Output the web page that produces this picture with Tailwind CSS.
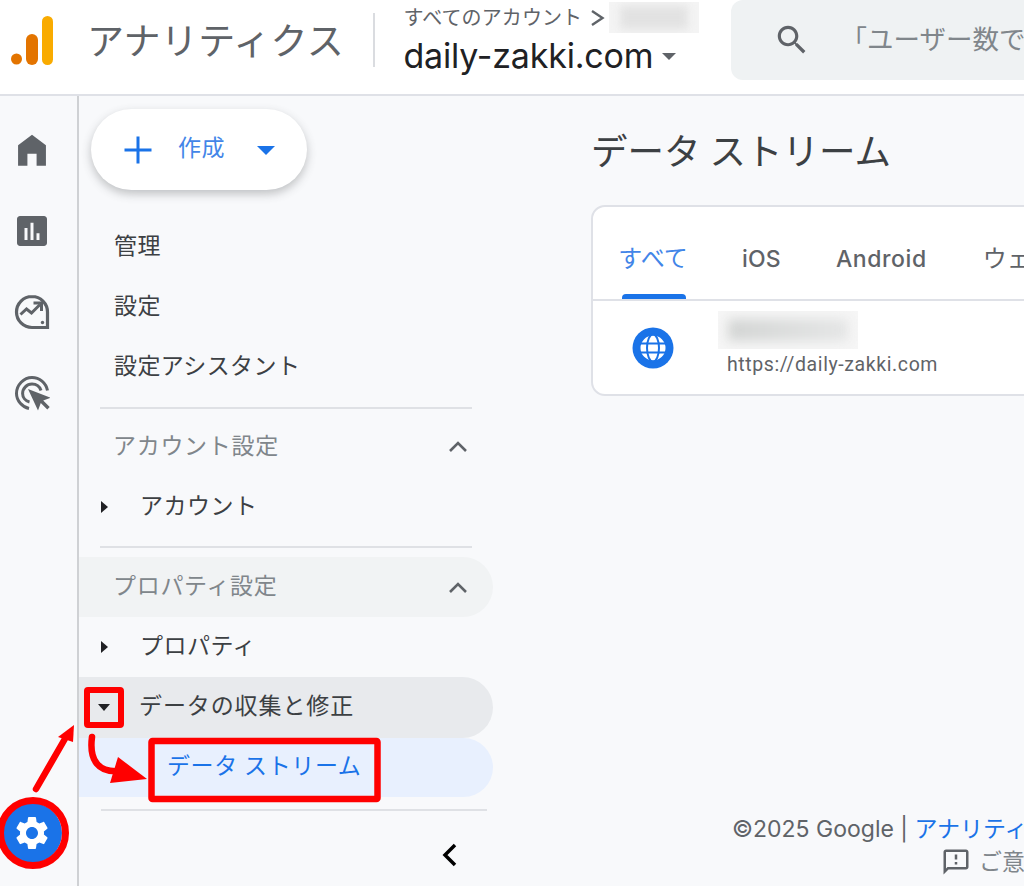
<!DOCTYPE html>
<html lang="ja">
  <head>
    <meta charset="UTF-8" />
    <title>アナリティクス</title>
    <script src="https://cdn.jsdelivr.net/npm/@tailwindcss/browser@4"></script>
  </head>
  <body class="relative w-[1024px] h-[886px] overflow-hidden bg-[#f8f9fb] text-[#3c4043] font-['Roboto','Noto_Sans_CJK_JP',sans-serif]">
    <!-- top bar -->
    <header class="flex items-center h-[96px] bg-white border-b-2 border-[#dfe1e7] overflow-hidden">
      <svg class="ml-[11px] w-[42px] h-[49px] mt-[-14px] shrink-0" viewBox="0 0 42 49">
        <rect x="31" y="0" width="11" height="49" rx="5.5" fill="#f9ab00" />
        <rect x="15" y="18" width="12" height="31" rx="6" fill="#e37400" />
        <circle cx="5.5" cy="43" r="5.5" fill="#e37400" />
      </svg>
      <div class="ml-[34px] w-[286px] mt-[-9px] text-[37px] tracking-[0.3px] leading-none text-[#5f6368] shrink-0 whitespace-nowrap">アナリティクス</div>
      <div class="w-[1.5px] h-[54px] bg-[#dadce0] mt-[-14px] shrink-0"></div>
      <div class="ml-[29px] w-[327px] shrink-0 mt-[-12px]">
        <div class="flex items-center h-[32px] mt-[-3px]">
          <span class="text-[20px] tracking-[0.1px] text-[#5f6368] whitespace-nowrap">すべてのアカウント</span>
          <svg class="ml-[8px] w-[16px] h-[20px]" viewBox="0 0 16 20" fill="none" stroke="#5f6368" stroke-width="2.4"><path d="M2 3l10.5 7L2 17" /></svg>
          <div class="ml-[3px] w-[90px] h-[31px] bg-[#f4f4f4] overflow-hidden">
            <div class="w-[90px] h-[31px] bg-[#e2e2e2] blur-[6px] scale-75"></div>
          </div>
        </div>
        <div class="flex items-center h-[44px]">
          <span class="text-[34px] leading-none tracking-[-0.2px] text-[#202124] whitespace-nowrap font-['Inter',sans-serif]">daily-zakki.com</span>
          <span class="ml-[9px] mt-[2px] w-0 h-0 border-x-[7.5px] border-x-transparent border-t-[7.5px] border-t-[#5f6368]"></span>
        </div>
      </div>
      <div class="flex items-center w-[400px] h-[80px] mt-[-14px] shrink-0 bg-[#eff2f3] rounded-[12px]">
        <svg class="ml-[42px] w-[38px] h-[38px] shrink-0" viewBox="0 0 24 24" fill="#5f6368"><path d="M15.5 14h-.79l-.28-.27C15.41 12.59 16 11.11 16 9.5 16 5.91 13.09 3 9.5 3S3 5.91 3 9.5 5.91 16 9.5 16c1.61 0 3.09-.59 4.23-1.57l.27.28v.79l5 4.99L20.49 19l-4.99-5zm-6 0C7.01 14 5 11.99 5 9.5S7.01 5 9.5 5 14 7.01 14 9.5 11.99 14 9.5 14z" /></svg>
        <span class="ml-[30px] text-[26.5px] text-[#80868b] whitespace-nowrap">「ユーザー数で</span>
      </div>
    </header>

    <div class="flex h-[790px]">
      <!-- icon rail -->
      <nav class="flex flex-col items-center w-[79px] shrink-0 border-r-2 border-[#cfd1d4] pt-[13px] pb-[23px] pr-[14px] pl-0">
        <div class="flex items-center justify-center h-[81px]">
          <svg class="w-[38px] h-[38px]" viewBox="0 0 24 24" fill="#5f6368"><path d="M12 2.3L3.2 9v13h5.9v-7.6h5.8V22h5.9V9z" /></svg>
        </div>
        <div class="flex items-center justify-center h-[81px]">
          <svg class="w-[36px] h-[36px]" viewBox="0 0 24 24" fill="#5f6368"><path d="M20 2H4C2.9 2 2 2.9 2 4v16c0 1.1.9 2 2 2h16c1.1 0 2-.9 2-2V4c0-1.1-.9-2-2-2zM9 18H7v-8h2v8zm4 0h-2V6.5h2V18zm4 0h-2v-4.5h2V18z" /></svg>
        </div>
        <div class="flex items-center justify-center h-[81px]">
          <svg class="w-[36px] h-[36px]" viewBox="0 0 36 36" fill="none" stroke="#5f6368" stroke-width="3.2">
            <path d="M18 2.5C9.4 2.5 2.5 9.4 2.5 18S9.4 33.5 18 33.5h15.5V18C33.5 9.4 26.6 2.5 18 2.5z" />
            <path d="M6.5 20.5l6-5.5 5 4 8.5-8.500" stroke-width="3" />
            <path d="M19.5 9h8V17" stroke-width="3" />
            <circle cx="28.5" cy="28.5" r="1.7" fill="#5f6368" stroke="none" />
          </svg>
        </div>
        <div class="flex items-center justify-center h-[81px]">
          <svg class="w-[36px] h-[36px]" viewBox="0 0 36 36" fill="none" stroke="#5f6368" stroke-width="3">
            <path d="M15 33.5C8.5 32 2.5 26 2.5 18.5 2.5 10 9.8 2.5 18 2.5c7.5 0 14 5.5 15.5 13" />
            <path d="M15.5 27C11.5 26 8.6 22.5 8.6 18.5c0-5.2 4.2-9.4 9.4-9.4 4.2 0 7.7 2.700 9 6.5" />
            <path d="M14 14l10 21.5 2.8-7.5 6.5 6.5 2.4-2.4-6.5-6.5 7.3-2.8z" fill="#5f6368" stroke="none" />
          </svg>
        </div>
        <button class="mt-auto flex items-center justify-center w-[60px] h-[60px] rounded-full bg-[#1a73e8] shrink-0">
          <svg class="w-[40px] h-[40px]" viewBox="0 0 24 24" fill="#fff"><path d="M19.14 12.94c.04-.3.06-.61.06-.94 0-.32-.02-.64-.07-.94l2.03-1.58c.18-.14.23-.41.12-.61l-1.92-3.32c-.12-.22-.37-.29-.59-.22l-2.39.96c-.5-.38-1.03-.7-1.62-.94l-.36-2.54c-.04-.24-.24-.41-.48-.41h-3.84c-.24 0-.43.17-.47.41l-.36 2.54c-.59.24-1.13.57-1.62.94l-2.39-.96c-.22-.08-.47 0-.59.22L2.74 8.87c-.12.21-.08.47.12.61l2.03 1.58c-.05.3-.09.63-.09.94s.02.64.07.94l-2.03 1.58c-.18.14-.23.41-.12.61l1.92 3.32c.12.22.37.29.59.22l2.39-.96c.5.38 1.03.7 1.62.94l.36 2.54c.05.24.24.41.48.41h3.84c.24 0 .44-.17.47-.41l.36-2.54c.59-.24 1.13-.56 1.62-.94l2.39.96c.22.08.47 0 .59-.22l1.92-3.32c.12-.22.07-.47-.12-.61l-2.01-1.58zM12 15.6c-1.98 0-3.6-1.62-3.6-3.6s1.62-3.6 3.6-3.6 3.6 1.62 3.6 3.6-1.62 3.6-3.6 3.6z" /></svg>
        </button>
      </nav>

      <!-- side menu -->
      <aside class="flex flex-col w-[414px] shrink-0 text-[23px]">
        <button class="flex items-center mt-[13px] ml-[12px] w-[216px] h-[81px] shrink-0 bg-white rounded-full shadow-[0_4px_10px_rgba(60,64,67,0.3)] text-[#1a73e8]">
          <svg class="ml-[32px] w-[30px] h-[30px]" viewBox="0 0 30 30" fill="#1a73e8"><path d="M13.5 1.5h3v12h12v3h-12v12h-3v-12h-12v-3h12z" /></svg>
          <span class="ml-[25px] tracking-[0.5px] text-[#4285e8]">作成</span>
          <span class="ml-[32px] mt-[2px] w-0 h-0 border-x-[9px] border-x-transparent border-t-[9px] border-t-[#1a73e8]"></span>
        </button>
        <div class="flex items-center h-[60px] mt-[26px] pt-[2px] pl-[35px] tracking-[0.4px]">管理</div>
        <div class="flex items-center h-[60px] pt-[2px] pl-[35px] tracking-[0.4px]">設定</div>
        <div class="flex items-center h-[60px] pt-[2px] pl-[35px] tracking-[0.4px]">設定アシスタント</div>
        <div class="h-[2px] mt-[11px] ml-[21px] w-[372px] bg-[#dfe1e5] shrink-0"></div>
        <div class="flex items-center justify-between h-[60px] mt-[7px] pt-[2px] pl-[34px] pr-[24px] text-[#80868b] tracking-[0.7px]">
          アカウント設定
          <svg class="w-[22px] h-[14px] mb-[2px]" viewBox="0 0 22 14" fill="none" stroke="#5f6368" stroke-width="2.6"><path d="M3 12l8-8 8 8" /></svg>
        </div>
        <div class="flex items-center h-[60px] pt-[2px]">
          <span class="ml-[22px] w-0 h-0 border-y-[6.5px] border-y-transparent border-l-[7px] border-l-[#202124]"></span>
          <span class="ml-[32px] tracking-[0.5px]">アカウント</span>
        </div>
        <div class="h-[2px] mt-[10px] ml-[21px] w-[372px] bg-[#dfe1e5] shrink-0"></div>
        <div class="flex items-center justify-between h-[60px] mt-[9px] pl-[34px] pr-[24px] pt-[1px] text-[#80868b] tracking-[0.7px] bg-[#f1f3f4] rounded-r-full">
          プロパティ設定
          <svg class="w-[22px] h-[14px] mb-[2px]" viewBox="0 0 22 14" fill="none" stroke="#5f6368" stroke-width="2.6"><path d="M3 12l8-8 8 8" /></svg>
        </div>
        <div class="flex items-center h-[60px]">
          <span class="ml-[22px] w-0 h-0 border-y-[6.5px] border-y-transparent border-l-[7px] border-l-[#202124]"></span>
          <span class="ml-[32px] tracking-[0.5px]">プロパティ</span>
        </div>
        <div class="flex items-center h-[61px] bg-[#e8eaed] rounded-r-full">
          <span class="ml-[19px] w-0 h-0 border-x-[6.5px] border-x-transparent border-t-[7px] border-t-[#202124]"></span>
          <span class="ml-[29px] tracking-[0.9px]">データの収集と修正</span>
        </div>
        <div class="flex items-center h-[59px] pl-[88px] bg-[#e8f0fe] rounded-r-full text-[#1a73e8] tracking-[0.6px]">データ ストリーム</div>
        <div class="h-[2px] mt-[12px] ml-[22px] w-[386px] bg-[#dfe1e5] shrink-0"></div>
        <div class="flex justify-end mt-[31px] pr-[34px]">
          <svg class="w-[20px] h-[26px]" viewBox="0 0 20 26" fill="none" stroke="#000" stroke-width="3.5"><path d="M16 3L6 13l10 10" /></svg>
        </div>
      </aside>

      <!-- main -->
      <main class="flex-1 min-w-0 pl-[98px] overflow-hidden">
        <h1 class="mt-[33px] text-[36.5px] leading-[48px] text-[#3c4043] whitespace-nowrap">データ ストリーム</h1>
        <section class="mt-[28px] w-[600px] h-[191px] bg-white border-2 border-[#dfe1e7] rounded-[14px]">
          <div class="flex h-[94px] border-b-2 border-[#dfe1e7] text-[23px] text-[#5f6368] font-medium font-['Inter','Noto_Sans_CJK_JP',sans-serif]">
            <div class="relative ml-[26px] w-[68px] flex items-center justify-center pt-[12px] text-[24px] text-[#4285e8] font-normal whitespace-nowrap">
              すべて
              <span class="absolute left-[3px] right-[1px] bottom-0 h-[5px] bg-[#1a73e8] rounded-t-[4px]"></span>
            </div>
            <div class="ml-[55px] flex items-center pt-[12px] tracking-[0.2px]">iOS</div>
            <div class="ml-[55px] flex items-center pt-[12px] tracking-[0.6px]">Android</div>
            <div class="ml-[56px] flex items-center pt-[12px] text-[24px] font-normal whitespace-nowrap">ウェ</div>
          </div>
          <div class="flex items-start">
            <svg class="ml-[39px] mt-[26px] w-[42px] h-[42px] shrink-0" viewBox="0 0 42 42" fill="none">
              <circle cx="21" cy="21" r="20.5" fill="#1a73e8" />
              <circle cx="21" cy="21" r="13.5" fill="#fff" />
              <g stroke="#1a73e8" stroke-width="2">
                <circle cx="21" cy="21" r="13.5" />
                <ellipse cx="21" cy="21" rx="6" ry="13.5" />
                <path d="M8 16.5h26M8 25.5h26" />
              </g>
            </svg>
            <div class="ml-[53px]">
              <div class="relative w-[140px] h-[38px] mt-[10px] ml-[-9px] bg-[#f6f6f6] overflow-hidden">
                <div class="w-[120px] h-[22px] mt-[8px] ml-[10px] bg-linear-to-r from-[#d2d4d3] to-[#e4e5e5] blur-[6px]"></div>
              </div>
              <div class="mt-[4px] text-[19.5px] leading-[24px] tracking-[0.6px] text-[#5f6368] whitespace-nowrap">https://daily-zakki.com</div>
            </div>
          </div>
        </section>
        <footer class="mt-[417px] text-[23px] whitespace-nowrap font-['Inter','Noto_Sans_CJK_JP',sans-serif]">
          <div class="pl-[141px] text-[#5f6368] h-[32px] leading-[32px]">©2025 Google | <span class="text-[#1a73e8]">アナリティ</span></div>
          <div class="flex items-center pl-[348px] h-[34px] text-[#80868b]">
            <svg class="w-[30px] h-[30px] shrink-0 ml-[2px]" viewBox="0 0 24 24" fill="#5f6368"><path d="M20 2H4c-1.1 0-2 .9-2 2v18l4-4h14c1.1 0 2-.9 2-2V4c0-1.1-.9-2-2-2zm0 14H5.17L4 17.17V4h16v12zM11 12h2v2h-2zm0-6h2v4h-2z" /></svg>
            <span class="ml-[8px]">ご意</span>
          </div>
        </footer>
      </main>
    </div>

    <!-- red annotations drawn on top of the screenshot -->
    <svg class="absolute inset-0 w-[1024px] h-[886px] pointer-events-none" viewBox="0 0 1024 886" fill="none">
      <circle cx="33" cy="833" r="32.5" stroke="#f00" stroke-width="7" />
      <rect x="87" y="690" width="34" height="35" stroke="#f00" stroke-width="6" rx="1" />
      <rect x="151.5" y="741" width="226" height="58" stroke="#f00" stroke-width="6.5" rx="1" />
      <path d="M36 789L66 737" stroke="#f00" stroke-width="6.5" stroke-linecap="round" />
      <path d="M74 725L58 737L73 742Z" fill="#f00" />
      <path d="M92 737C89 760 98 773 120 771" stroke="#f00" stroke-width="6.5" stroke-linecap="round" />
      <path d="M147 779L118 757L110 783Z" fill="#f00" />
    </svg>
  </body>
</html>
